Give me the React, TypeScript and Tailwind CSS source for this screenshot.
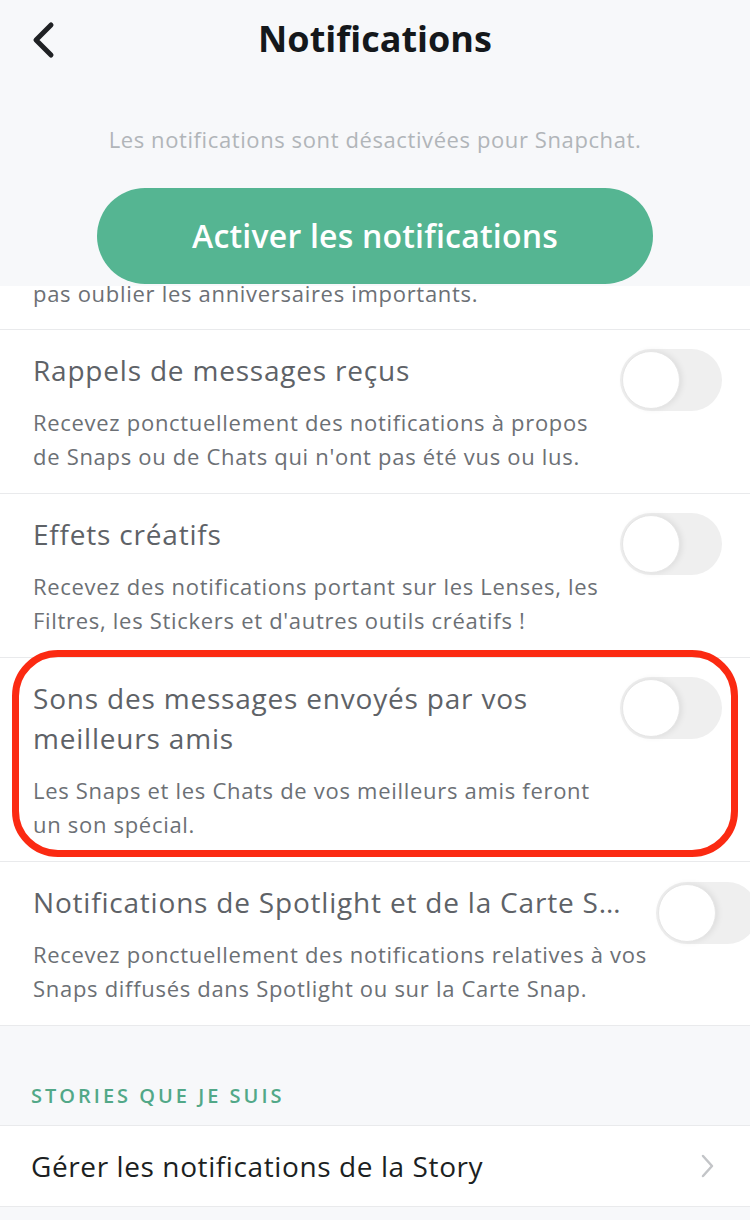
import React from "react";

const font = { fontFamily: "'Open Sans', 'Noto Sans', sans-serif" };

function Toggle({ className = "" }: { className?: string }) {
  return (
    <div className={`relative h-[62px] w-[102px] shrink-0 rounded-full bg-[#efefef] ${className}`}>
      <div className="absolute left-[2px] top-[2px] h-[58px] w-[58px] rounded-full border border-[#e6e6e6] bg-white shadow-[2px_0_6px_rgba(0,0,0,0.08)]" />
    </div>
  );
}

function Row({
  title,
  desc,
  truncate = false,
  children,
}: {
  title: React.ReactNode;
  desc: React.ReactNode;
  truncate?: boolean;
  children?: React.ReactNode;
}) {
  return (
    <div className="relative border-b border-[#e9eaec] bg-white">
      {children}
      <div className={`flex items-start pt-5 pb-5 pl-[33px] ${truncate ? "pr-0" : "pr-[28px]"}`}>
        <div className="min-w-0 flex-1 pr-[28px]">
          <div
            className={`text-[28px] leading-[40px] tracking-[0.8px] text-[#5e6267] ${truncate ? "truncate" : ""}`}
          >
            {title}
          </div>
          <div className="mt-[15px] whitespace-nowrap text-[22px] leading-[34px] tracking-[0.7px] text-[#6c7075]">
            {desc}
          </div>
        </div>
        <Toggle className={truncate ? "-mr-[8px]" : "mt-[-1px]"} />
      </div>
    </div>
  );
}

export default function App() {
  return (
    <div className="h-[1220px] w-[750px] overflow-hidden bg-[#f7f8fa]" style={font}>
      {/* header */}
      <div className="relative h-[286px] bg-[#f7f8fa]">
        <div className="flex h-[78px] items-center justify-center">
          <svg
            className="absolute left-[28px] top-[21px]"
            width="30"
            height="38"
            viewBox="0 0 30 38"
            fill="none"
          >
            <path d="M23 4 L8 19 L23 34" stroke="#1f2124" strokeWidth="5" strokeLinecap="round" strokeLinejoin="round" />
          </svg>
          <h1 className="text-[36px] font-bold text-[#15181b]">Notifications</h1>
        </div>
        <p className="mt-[45px] text-center text-[22px] tracking-[0.6px] text-[#b1b5b9]">
          Les notifications sont désactivées pour Snapchat.
        </p>
        <div className="mt-[32px] flex justify-center">
          <button className="flex h-[96px] w-[556px] items-center justify-center rounded-full bg-[#55b592] text-[32px] font-semibold tracking-[0.2px] text-white">
            Activer les notifications
          </button>
        </div>
      </div>

      {/* list */}
      <div className="bg-white">
        <div className="h-[44px] overflow-hidden border-b border-[#e9eaec]">
          <div className="mt-[-10px] pl-[33px] text-[22px] leading-[34px] tracking-[0.7px] text-[#6c7075]">
            pas oublier les anniversaires importants.
          </div>
        </div>
        <Row
          title="Rappels de messages reçus"
          desc={
            <>
              Recevez ponctuellement des notifications à propos
              <br />
              de Snaps ou de Chats qui n'ont pas été vus ou lus.
            </>
          }
        />
        <Row
          title="Effets créatifs"
          desc={
            <>
              Recevez des notifications portant sur les Lenses, les
              <br />
              Filtres, les Stickers et d'autres outils créatifs !
            </>
          }
        />
        <Row
          title={
            <>
              Sons des messages envoyés par vos
              <br />
              meilleurs amis
            </>
          }
          desc={
            <>
              Les Snaps et les Chats de vos meilleurs amis feront
              <br />
              un son spécial.
            </>
          }
        >
          <div className="pointer-events-none absolute -top-[8px] bottom-[4px] left-[12px] right-[12px] z-10 rounded-[46px] border-[7px] border-[#fb2a12]" />
        </Row>
        <Row
          truncate
          title="Notifications de Spotlight et de la Carte Snap"
          desc={
            <>
              Recevez ponctuellement des notifications relatives à vos
              <br />
              Snaps diffusés dans Spotlight ou sur la Carte Snap.
            </>
          }
        />
      </div>

      {/* section */}
      <div className="flex h-[100px] items-end border-b border-[#e9eaec] pb-[14px] pl-[31px]">
        <span className="text-[20px] font-semibold tracking-[3px] text-[#52a888]">STORIES QUE JE SUIS</span>
      </div>
      <div className="flex h-[81px] items-center justify-between border-b border-[#e9eaec] bg-white pl-[31px] pr-[34px]">
        <span className="text-[28px] tracking-[0.6px] text-[#1c1f22]">Gérer les notifications de la Story</span>
        <svg width="16" height="26" viewBox="0 0 16 26" fill="none">
          <path d="M3 3 L12 13 L3 23" stroke="#c3c5c8" strokeWidth="2.5" strokeLinecap="round" strokeLinejoin="round" />
        </svg>
      </div>
    </div>
  );
}
